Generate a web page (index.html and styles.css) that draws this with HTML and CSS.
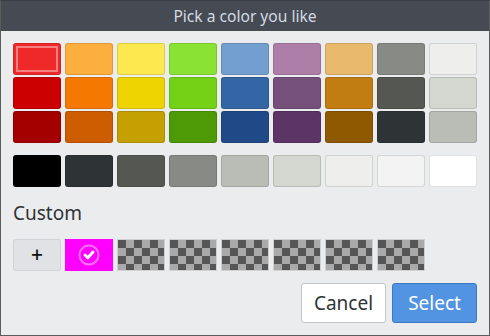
FILE: index.html
```html
<!DOCTYPE html>
<html lang="en">
<head>
    <meta charset="UTF-8">
    <title>Pick a color you like</title>
    <link rel="stylesheet" href="styles.css">
</head>
<body>
<div class="dialogo">
    <div class="titulo">Pick a color you like</div>
    <div class="contenido">
        <div class="paleta">
            <div class="muestra elegida" style="background:#ef2929"></div>
            <div class="muestra" style="background:#fcaf3e"></div>
            <div class="muestra" style="background:#fce94f"></div>
            <div class="muestra" style="background:#8ae234"></div>
            <div class="muestra" style="background:#729fcf"></div>
            <div class="muestra" style="background:#ad7fa8"></div>
            <div class="muestra" style="background:#e9b96e"></div>
            <div class="muestra" style="background:#888a85"></div>
            <div class="muestra" style="background:#eeeeec"></div>

            <div class="muestra" style="background:#cc0000"></div>
            <div class="muestra" style="background:#f57900"></div>
            <div class="muestra" style="background:#edd400"></div>
            <div class="muestra" style="background:#73d216"></div>
            <div class="muestra" style="background:#3465a4"></div>
            <div class="muestra" style="background:#75507b"></div>
            <div class="muestra" style="background:#c17d11"></div>
            <div class="muestra" style="background:#555753"></div>
            <div class="muestra" style="background:#d3d7cf"></div>

            <div class="muestra" style="background:#a40000"></div>
            <div class="muestra" style="background:#ce5c00"></div>
            <div class="muestra" style="background:#c4a000"></div>
            <div class="muestra" style="background:#4e9a06"></div>
            <div class="muestra" style="background:#204a87"></div>
            <div class="muestra" style="background:#5c3566"></div>
            <div class="muestra" style="background:#8f5902"></div>
            <div class="muestra" style="background:#2e3436"></div>
            <div class="muestra" style="background:#babdb6"></div>
        </div>

        <div class="paleta grises">
            <div class="muestra" style="background:#000000"></div>
            <div class="muestra" style="background:#2e3436"></div>
            <div class="muestra" style="background:#555753"></div>
            <div class="muestra" style="background:#888a85"></div>
            <div class="muestra" style="background:#babdb6"></div>
            <div class="muestra" style="background:#d3d7cf"></div>
            <div class="muestra" style="background:#eeeeec"></div>
            <div class="muestra" style="background:#f3f3f3"></div>
            <div class="muestra" style="background:#ffffff"></div>
        </div>

        <div class="etiqueta">Custom</div>

        <div class="paleta">
            <div class="muestra agregar">+</div>
            <div class="muestra magenta">
                <svg width="48" height="32" viewBox="0 0 48 32">
                    <circle cx="24" cy="16" r="9.5" fill="none" stroke="rgba(255,255,255,0.45)" stroke-width="2"/>
                    <path d="M20 16 L22.8 18.8 L28 13" fill="none" stroke="#ffffff" stroke-width="3" stroke-linecap="round" stroke-linejoin="round"/>
                </svg>
            </div>
            <div class="muestra cuadros"></div>
            <div class="muestra cuadros"></div>
            <div class="muestra cuadros"></div>
            <div class="muestra cuadros"></div>
            <div class="muestra cuadros"></div>
            <div class="muestra cuadros"></div>
        </div>

        <div class="acciones">
            <button class="boton">Cancel</button>
            <button class="boton principal">Select</button>
        </div>
    </div>
</div>
</body>
</html>
```

FILE: styles.css
```css
/*
* Dialogo para escoger un color
*/
body {
    margin: 0;
    font-family: "Noto Sans", "Open Sans", sans-serif;
}
.dialogo {
    width: 490px;
    height: 336px;
    box-sizing: border-box;
    border: 1px solid #5c5c5c;
    border-top-color: #3a3d42;
    background-color: #ebecee;
    display: flex;
    flex-direction: column;
}
.titulo {
    height: 30px;
    background-color: #464a52;
    color: #d3dae3;
    font-size: 15.6px;
    line-height: 30px;
    text-align: center;
}
.contenido {
    padding: 12px;
    display: flex;
    flex-direction: column;
}
.paleta {
    display: grid;
    grid-template-columns: repeat(9, 48px);
    grid-auto-rows: 32px;
    column-gap: 4px;
    row-gap: 2px;
}
.grises {
    margin-top: 12px;
}
.muestra {
    position: relative;
    border-radius: 3px;
    box-shadow: inset 0 0 0 1px rgba(0, 0, 0, 0.12);
}
.elegida::after {
    content: "";
    position: absolute;
    top: 3px;
    left: 3px;
    right: 3px;
    bottom: 3px;
    border: 2px solid rgba(255, 255, 255, 0.4);
}
.etiqueta {
    margin: 14px 0;
    font-size: 19px;
    line-height: 24px;
    color: #2e3436;
}
.agregar {
    background-color: #e1e2e5;
    box-shadow: inset 0 0 0 1px #d2d3d6;
    color: #111111;
    font-size: 21px;
    font-weight: 500;
    line-height: 31px;
    text-align: center;
}
.magenta {
    background-color: #ff00ff;
    box-shadow: none;
    border-radius: 0;
}
.magenta svg {
    display: block;
}
.cuadros {
    border-radius: 0;
    background: repeating-conic-gradient(#aaaaaa 0 25%, #555555 0 50%) 1px 1px / 16px 16px;
    box-shadow: inset 0 0 0 1px #cfd0d2;
}
.acciones {
    margin-top: 12px;
    display: flex;
    justify-content: flex-end;
    gap: 6px;
}
.boton {
    width: 85px;
    height: 40px;
    padding: 0;
    border: 1px solid #c3c5c8;
    border-radius: 3px;
    background-color: #ffffff;
    color: #2e3436;
    font-family: "Noto Sans", "Open Sans", sans-serif;
    font-size: 19px;
}
.principal {
    background-color: #5294e2;
    border-color: #3d79c1;
    color: #ffffff;
}
```
